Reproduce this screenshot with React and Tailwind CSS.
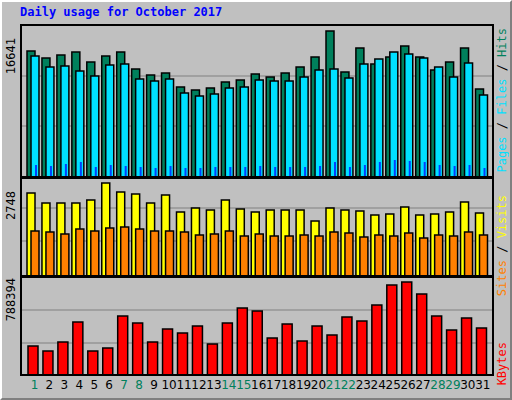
const hits = [49,56,53,50,60,54,50,67,73,71,85,88,86,80,78,72,75,71,65,55,29,70,46,62,55,44,55,68,60,46,87];
const files = [54,65,64,69,74,63,62,77,79,77,91,94,92,86,85,78,79,79,75,68,67,76,62,57,50,52,56,65,75,61,93];
const pages = [163,164,162,160,165,163,164,165,166,164,166,166,165,165,165,164,165,165,165,164,160,165,163,160,158,159,160,163,164,163,166];
const visits = [194,204,204,204,201,184,193,195,204,196,213,209,211,201,210,213,211,211,211,222,209,211,212,216,215,208,216,215,213,203,214];
const sites = [232,233,235,230,232,229,228,230,232,232,233,236,235,232,237,235,237,237,236,237,233,234,238,236,237,234,239,236,237,233,236];
const kbytes = [348,353,344,324,353,350,318,325,344,331,335,328,346,325,310,313,340,326,343,328,337,319,323,307,287,284,296,318,332,320,330];
const weekend = [1, 7, 8, 14, 15, 21, 22, 28, 29];

const dx = (i) => 5 + i * 14.95;

const Bar = ({ x, top, bottom, w, fill }) => (
  <rect x={x} y={top} width={w} height={Math.max(bottom - top, 0)} fill={fill} stroke="#000" strokeWidth="1.5" />
);

const vlabel = "[writing-mode:vertical-rl] rotate-180 font-[DejaVu_Sans_Mono] text-[12px] leading-none";

const App = () => {
  return (
    <div className="w-[512px] h-[400px] bg-[#c0c0c0] border-l-2 border-t-2 border-white border-r-2 border-b-2 border-r-[#808080] border-b-[#808080] flex flex-col font-[DejaVu_Sans_Mono]">
      <div className="h-[22px] pl-[18px] pt-[4px] text-[12px] font-bold text-[#0000ff] leading-none">Daily usage for October 2017</div>

      <div className="flex items-start h-[154px]">
        <div className="w-[18px] flex justify-center items-start pt-[14px]"><span className={vlabel}>16641</span></div>
        <svg width="474" height="154" className="border-2 border-black">
          <line x1="0" x2="472" y1="50" y2="50" stroke="#808080" />
          <line x1="0" x2="472" y1="100" y2="100" stroke="#808080" />
          {hits.map((t, i) => (
            <g key={i}>
              <Bar x={dx(i)} top={t - 24} bottom={153} w={8} fill="#00805c" />
              <Bar x={dx(i) + 4} top={files[i] - 24} bottom={153} w={8} fill="#00e0ff" />
              <rect x={dx(i) + 8} y={pages[i] - 24} width={2} height={153 - pages[i] + 24} fill="#0040ff" />
            </g>
          ))}
        </svg>
        <div className="flex-1 flex justify-center items-start pt-[4px]">
          <span className={vlabel}>
            <span className="text-[#00e0ff]">Pages</span> / <span className="text-[#00e0ff]">Files</span> / <span className="text-[#00805c]">Hits</span>
          </span>
        </div>
      </div>

      <div className="flex items-start h-[100px] -mt-[1px]">
        <div className="w-[18px] flex justify-center items-start pt-[14px]"><span className={vlabel}>2748</span></div>
        <svg width="474" height="100" className="border-2 border-black">
          <line x1="0" x2="472" y1="29" y2="29" stroke="#808080" />
          <line x1="0" x2="472" y1="62" y2="62" stroke="#808080" />
          {visits.map((t, i) => (
            <g key={i}>
              <Bar x={dx(i)} top={t - 180} bottom={97} w={8} fill="#ffff00" />
              <Bar x={dx(i) + 4} top={sites[i] - 180} bottom={97} w={8} fill="#ff8000" />
            </g>
          ))}
        </svg>
        <div className="flex-1 flex justify-center items-start pt-[18px]">
          <span className={vlabel}>
            <span className="text-[#ff8000]">Sites</span> / <span className="text-[#ffff00]">Visits</span>
          </span>
        </div>
      </div>

      <div className="flex items-start h-[100px] -mt-[1px]">
        <div className="w-[18px] flex justify-center items-start pt-[2px]"><span className={vlabel}>788394</span></div>
        <svg width="474" height="100" className="border-2 border-black">
          <line x1="0" x2="472" y1="32" y2="32" stroke="#808080" />
          <line x1="0" x2="472" y1="65" y2="65" stroke="#808080" />
          {kbytes.map((t, i) => (
            <Bar key={i} x={dx(i) + 1} top={t - 280} bottom={97} w={10} fill="#ff0000" />
          ))}
        </svg>
        <div className="flex-1 flex justify-center items-start pt-[66px]">
          <span className={vlabel + " text-[#ff0000]"}>KBytes</span>
        </div>
      </div>

      <div className="flex pl-[20px] pt-[3px] text-[12px] leading-none font-[DejaVu_Sans]">
        {hits.map((_, i) => (
          <span key={i} className={"w-[14.95px] text-center " + (weekend.includes(i + 1) ? "text-[#00805c]" : "text-black")} style={{ marginLeft: i === 0 ? 5 : 0 }}>
            {i + 1}
          </span>
        ))}
      </div>
    </div>
  );
};

export default App;
